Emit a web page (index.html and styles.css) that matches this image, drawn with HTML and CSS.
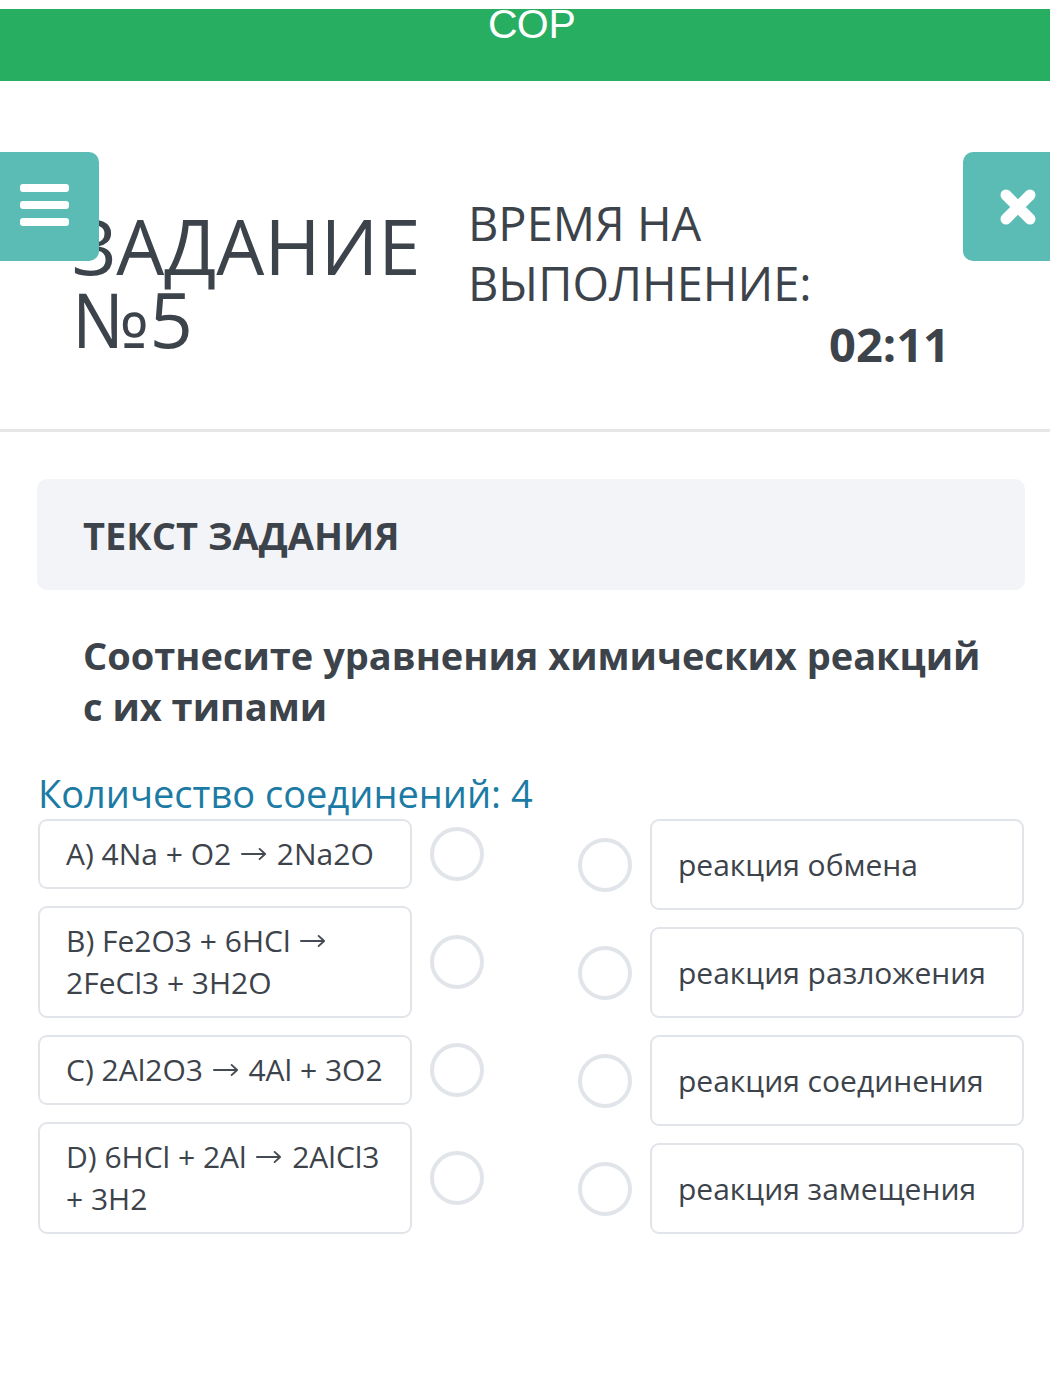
FILE: index.html
```html
<!DOCTYPE html>
<html lang="ru">
<head>
  <meta charset="UTF-8" />
  <meta name="viewport" content="width=device-width, initial-scale=1.0" />
  <title>СОР — Задание №5</title>
  <link rel="stylesheet" href="styles.css">
</head>
<body>

  <div class="topbar"><span>СОР</span></div>

  <header class="task-head">
    <button class="menu-btn" aria-label="Меню">
      <span></span><span></span><span></span>
    </button>

    <h1 class="task-title">ЗАДАНИЕ<br>№5</h1>

    <div class="timer">
      <div class="timer-label">ВРЕМЯ НА<br>ВЫПОЛНЕНИЕ:</div>
      <div class="timer-value">02:11</div>
    </div>

    <button class="close-btn" aria-label="Закрыть">
      <svg width="40" height="40" viewBox="0 0 40 40">
        <path d="M8 8 L32 32 M32 8 L8 32" stroke="#fff" stroke-width="11" stroke-linecap="round" fill="none"/>
      </svg>
    </button>
  </header>

  <div class="task-box">ТЕКСТ ЗАДАНИЯ</div>

  <p class="question">Соотнесите уравнения химических реакций с их типами</p>

  <div class="count">Количество соединений: 4</div>

  <div class="match">
    <div class="match-col">
      <div class="match-row">
        <div class="item">A) 4Na + O2 <svg class="arr" viewBox="0 0 28 14"><path d="M1 7 H26 M20 1.5 L26 7 L20 12.5"/></svg> 2Na2O</div>
        <span class="dot"></span>
      </div>
      <div class="match-row">
        <div class="item">B) Fe2O3 + 6HCl <svg class="arr" viewBox="0 0 28 14"><path d="M1 7 H26 M20 1.5 L26 7 L20 12.5"/></svg><br>2FeCl3 + 3H2O</div>
        <span class="dot"></span>
      </div>
      <div class="match-row">
        <div class="item">C) 2Al2O3 <svg class="arr" viewBox="0 0 28 14"><path d="M1 7 H26 M20 1.5 L26 7 L20 12.5"/></svg> 4Al + 3O2</div>
        <span class="dot"></span>
      </div>
      <div class="match-row">
        <div class="item">D) 6HCl + 2Al <svg class="arr" viewBox="0 0 28 14"><path d="M1 7 H26 M20 1.5 L26 7 L20 12.5"/></svg> 2AlCl3<br>+ 3H2</div>
        <span class="dot"></span>
      </div>
    </div>

    <div class="match-col">
      <div class="match-row">
        <span class="dot"></span>
        <div class="item item-right">реакция обмена</div>
      </div>
      <div class="match-row">
        <span class="dot"></span>
        <div class="item item-right">реакция разложения</div>
      </div>
      <div class="match-row">
        <span class="dot"></span>
        <div class="item item-right">реакция соединения</div>
      </div>
      <div class="match-row">
        <span class="dot"></span>
        <div class="item item-right">реакция замещения</div>
      </div>
    </div>
  </div>

</body>
</html>
```

FILE: styles.css
```css
body {
  margin: 0;
  font-family: "Open Sans", "Noto Sans", sans-serif;
  color: #3d434b;
  background: #fff;
}
.topbar {
  margin-top: 9px;
  height: 72px;
  padding-left: 14px;
  background: #27ae60;
  color: #fff;
  text-align: center;
  font-family: "Liberation Sans", Arial, sans-serif;
  font-size: 41px;
}
.topbar span {
  display: block;
  line-height: 30px;
}
.task-head {
  position: relative;
  display: flex;
  padding: 112px 0 54px 72px;
  border-bottom: 3px solid #e6e6e6;
}
.menu-btn {
  position: absolute;
  left: 0;
  top: 71px;
  width: 99px;
  height: 109px;
  border: 0;
  border-radius: 0 10px 10px 0;
  background: #5bbcb5;
  display: flex;
  flex-direction: column;
  padding: 32px 0 0 20px;
  gap: 9px;
}
.menu-btn span {
  display: block;
  width: 49px;
  height: 8px;
  border-radius: 3px;
  background: #fff;
}
.close-btn {
  position: absolute;
  right: -10px;
  top: 71px;
  width: 97px;
  height: 109px;
  border: 0;
  border-radius: 10px;
  background: #5bbcb5;
  display: flex;
  align-items: center;
  padding: 0 0 0 35px;
}
.task-title {
  margin: 16px 0 0;
  width: 396px;
  font-size: 76px;
  font-weight: 400;
  line-height: 73px;
}
.timer {
  width: 482px;
}
.timer-label {
  font-size: 47px;
  line-height: 60px;
}
.timer-value {
  text-align: right;
  font-size: 47px;
  font-weight: 700;
  line-height: 62px;
}
.task-box {
  margin: 47px 25px 0 37px;
  height: 111px;
  box-sizing: border-box;
  padding: 4px 46px 0;
  border-radius: 10px;
  background: #f3f4f7;
  font-size: 38px;
  font-weight: 700;
  line-height: 105px;
}
.question {
  margin: 40px 60px 0 83px;
  font-size: 38px;
  font-weight: 700;
  line-height: 51px;
}
.count {
  margin: 39px 0 0 38px;
  color: #1b7ba4;
  font-size: 38px;
  line-height: 44px;
}
.match {
  display: flex;
  gap: 94px;
  margin: 4px 0 0 38px;
}
.match-col {
  display: flex;
  flex-direction: column;
  gap: 17px;
}
.match-row {
  display: flex;
  align-items: center;
  gap: 18px;
}
.item {
  width: 374px;
  box-sizing: border-box;
  padding: 12px 14px 12px 26px;
  border: 2px solid #e1e5ea;
  border-radius: 9px;
  font-size: 30px;
  line-height: 42px;
}
.arr {
  width: 26px;
  height: 14px;
  margin: 0 2px;
  vertical-align: 4px;
  fill: none;
  stroke: #454b53;
  stroke-width: 2;
  stroke-linecap: round;
  stroke-linejoin: round;
}
.item-right {
  height: 91px;
  display: flex;
  align-items: center;
  font-size: 30px;
}
.dot {
  flex: none;
  width: 54px;
  height: 54px;
  box-sizing: border-box;
  border: 4px solid #e1e5ea;
  border-radius: 50%;
}
```
